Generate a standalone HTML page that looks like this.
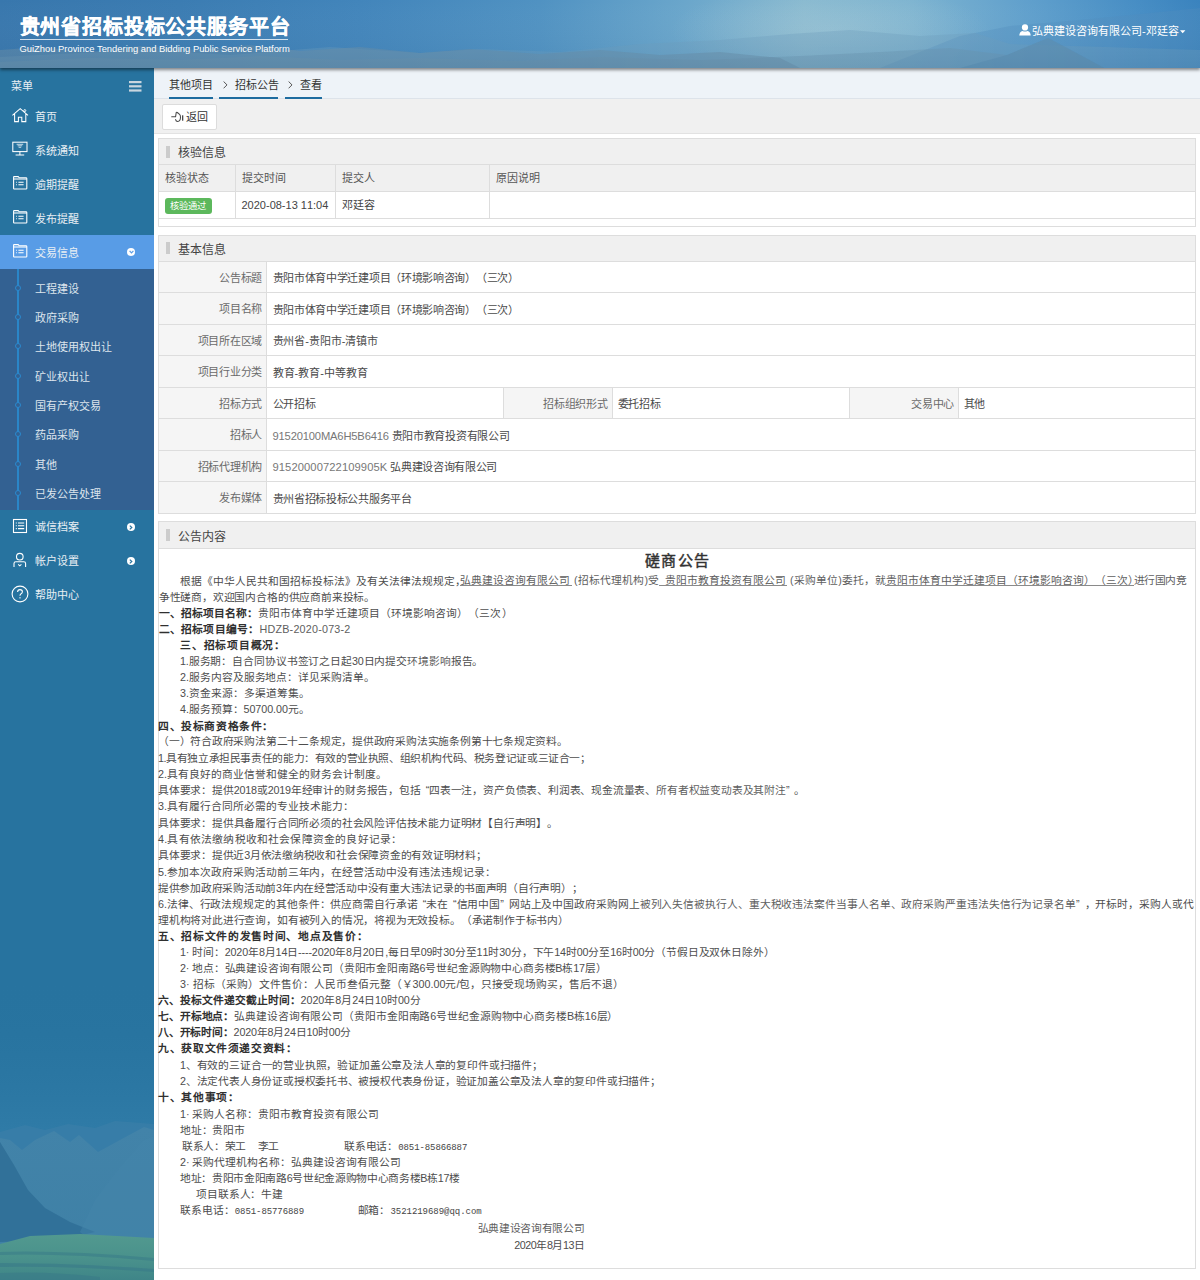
<!DOCTYPE html>
<html lang="zh-CN"><head><meta charset="utf-8">
<style>
*{box-sizing:border-box;margin:0;padding:0}
html,body{width:1200px;height:1280px;overflow:hidden;background:#fff;font-family:"Liberation Sans",sans-serif;color:#333}
#hd{position:absolute;left:0;top:0;width:1200px;height:68px;overflow:hidden;background:#3d80b6;box-shadow:0 2px 3px rgba(0,0,0,.45);z-index:5}
#hd .t{position:absolute;left:19.5px;top:11px;font-size:20px;font-weight:bold;color:#fff;letter-spacing:0.85px;-webkit-text-stroke:0.35px #fff;white-space:nowrap}
#hd .ul{position:absolute;left:20px;top:39px;width:268px;height:1px;background:rgba(255,255,255,.75)}
#hd .e{position:absolute;left:19.5px;top:43px;font-size:9.39px;color:#fff;white-space:nowrap}
#hd .u{position:absolute;left:1032px;top:22px;font-size:11px;color:#fff;white-space:nowrap}
#sb{position:absolute;left:0;top:68px;width:154px;height:1212px;background:#27739f;overflow:hidden}
#main{position:absolute;left:154px;top:68px;width:1046px;height:1212px;background:#fff}
.crumb{position:absolute;left:0;top:0;width:1046px;height:31px;background:#eef3f8;border-bottom:1px solid #dde3ea}
.tb{position:absolute;left:0;top:31px;width:1046px;height:35px;background:#f0f0f0;border-bottom:1px solid #e2e2e2}
.panel{position:absolute;left:4px;width:1038px;border:1px solid #ddd;background:#fff}
.ph{height:26px;background:#f0f0f0;border-bottom:1px solid #ddd;position:relative}
.ph .bar{position:absolute;left:8px;top:8px;width:4px;height:12px;background:#ccc}
.ph .tt{position:absolute;left:20px;top:5px;font-size:12px;color:#444}

#sb .it{position:absolute;left:0;width:154px;height:34px}
#sb .tx{position:absolute;left:35px;font-size:11px;color:#e9eff4;white-space:nowrap;line-height:14px}
#sb svg{position:absolute}
#sb .sub{position:absolute;left:0;top:201px;width:154px;height:241px;background:#336192}
#sb .vl{position:absolute;left:17px;top:0;width:2px;height:241px;background:#2a86c8}
#sb .dot{position:absolute;left:15px;width:6px;height:6px;border-radius:50%;border:1px solid #2a8ad0;background:#336192}
#sb .chev{position:absolute;left:126.8px;width:8.5px;height:8.5px;border-radius:50%;background:#fff}

.crumb .ci{position:absolute;top:10px;font-size:11px;color:#333;white-space:nowrap;line-height:14px}
.crumb .cu{position:absolute;top:29px;height:2px;background:#1d6ca0}
.crumb .gt{position:absolute;top:14px;width:4px;height:4px;border-right:1px solid #555;border-top:1px solid #555;transform:rotate(45deg)}
.btn{position:absolute;left:7.5px;top:5px;width:55px;height:26px;background:#fff;border:1px solid #dcdcdc;border-radius:2px}
.btn .bt{position:absolute;left:23px;top:5px;font-size:11px;color:#333;line-height:14px}
.c{position:absolute;white-space:nowrap;line-height:14px;text-spacing-trim:space-all;font-kerning:none}
.hl{position:absolute;height:1px;background:#ddd}
.vl2{position:absolute;width:1px;background:#ddd}
</style></head>
<body>
<div id="hd"><svg style="position:absolute;left:0;top:0" width="1200" height="68" viewBox="0 0 1200 68">
<defs>
<linearGradient id="hg" x1="0" y1="0" x2="1" y2="0">
<stop offset="0" stop-color="#3877ad"/>
<stop offset="0.15" stop-color="#3b7cb2"/>
<stop offset="0.3" stop-color="#4285bb"/>
<stop offset="0.45" stop-color="#5092c2"/>
<stop offset="0.57" stop-color="#6aa6cb"/>
<stop offset="0.67" stop-color="#86b8cf"/>
<stop offset="0.76" stop-color="#7cb3d0"/>
<stop offset="0.86" stop-color="#5f9fcc"/>
<stop offset="0.95" stop-color="#468dc4"/>
<stop offset="1" stop-color="#3a83be"/>
</linearGradient>
<linearGradient id="vg" x1="0" y1="0" x2="0" y2="1">
<stop offset="0" stop-color="#ffffff" stop-opacity="0"/>
<stop offset="1" stop-color="#20466a" stop-opacity="0.08"/>
</linearGradient>
<radialGradient id="mist" cx="0.5" cy="0.5" r="0.5">
<stop offset="0" stop-color="#a6cad8" stop-opacity="0.45"/>
<stop offset="1" stop-color="#a6cad8" stop-opacity="0"/>
</radialGradient>
</defs>
<rect width="1200" height="68" fill="url(#hg)"/>
<ellipse cx="830" cy="30" rx="160" ry="45" fill="url(#mist)"/>
<path d="M880 68 L960 36 L1010 26 L1080 20 L1140 14 L1200 8 L1200 68 Z" fill="#4f8cbd" opacity="0.35"/>
<path d="M0 68 L0 57 L60 54 L150 50 L230 55 L330 47 L420 53 L480 49 L560 52 L640 44 L720 40 L790 34 L850 30 L920 36 L975 33 L1010 44 L1200 50 L1200 68 Z" fill="#6d9dbd" opacity="0.35"/>
<path d="M0 68 L0 62 L90 58 L180 60 L260 56 L340 60 L420 58 L520 61 L600 57 L700 60 L800 56 L880 52 L950 48 L1007 55 L1048 38 L1104 68 Z" fill="#6a93ae" opacity="0.4"/>
<path d="M960 68 L1007 55 L1048 38 L1075 52 L1104 68 Z" fill="#5689af" opacity="0.4"/>
<path d="M0 68 L0 50 L40 47 L90 52 L140 46 L200 50 L250 45 L300 51 L360 47 L420 53 L470 49 L540 54 L600 50 L660 55 L720 52 L780 58 L800 68 Z" fill="#678ea8" opacity="0.5"/>
<rect width="1200" height="68" fill="url(#vg)"/>
</svg>
  <div class="t">贵州省招标投标公共服务平台</div>
  <div class="ul"></div>
  <div class="e">GuiZhou Province Tendering and Bidding Public Service Platform</div>
  <svg style="position:absolute;left:1019px;top:24px" width="12" height="12" viewBox="0 0 12 12"><circle cx="6" cy="3.4" r="3.1" fill="#fff"/><path d="M0.3 11.6 Q0.4 7.6 3.6 6.9 Q6 7.9 8.4 6.9 Q11.6 7.6 11.7 11.6 Z" fill="#fff"/></svg><div class="u">弘典建设咨询有限公司-邓廷容</div><svg style="position:absolute;left:1180px;top:30px" width="6" height="4" viewBox="0 0 6 4"><path d="M0 0.3 H5.4 L2.7 3.2 Z" fill="#fff"/></svg>
</div>
<div id="sb"><svg style="position:absolute;left:0;top:912px" width="154" height="300" viewBox="0 980 154 300">
<defs>
<linearGradient id="sg1" x1="0" y1="0" x2="0" y2="1">
<stop offset="0" stop-color="#27739f" stop-opacity="0"/>
<stop offset="1" stop-color="#2f7ba7" stop-opacity="1"/>
</linearGradient>
<linearGradient id="field" x1="0" y1="0" x2="0" y2="1">
<stop offset="0" stop-color="#52998f"/>
<stop offset="0.5" stop-color="#4a928c"/>
<stop offset="1" stop-color="#3f8588"/>
</linearGradient>
<linearGradient id="mtn" x1="0" y1="0" x2="0" y2="1">
<stop offset="0" stop-color="#4283a9"/>
<stop offset="1" stop-color="#3e80a5"/>
</linearGradient>
</defs>
<rect x="0" y="980" width="154" height="150" fill="url(#sg1)"/>
<rect x="0" y="1129" width="154" height="151" fill="#2f7ba7"/>
<path d="M0 1132 L25 1125 L45 1130 L68 1124 L95 1128 L115 1121 L154 1124 L154 1280 L0 1280 Z" fill="#3a7fa8" opacity="0.7"/>
<path d="M0 1138 L10 1140 L22 1150 L35 1140 L54 1131 L70 1142 L79 1135 L98 1152 L120 1140 L144 1127 L154 1130 L154 1280 L0 1280 Z" fill="url(#mtn)"/>
<path d="M0 1142 L14 1165 L28 1190 L45 1208 L70 1222 L95 1232 L60 1240 L0 1242 Z" fill="#2f6f97" opacity="0.85"/>
<path d="M80 1232 L95 1200 L118 1170 L144 1140 L154 1136 L154 1240 L90 1240 Z" fill="#4586ab" opacity="0.45"/>
<path d="M0 1244 L30 1236 L80 1234 L154 1238 L154 1280 L0 1280 Z" fill="url(#field)"/>
<path d="M0 1252 Q60 1250 154 1258 L154 1261 Q60 1253 0 1255 Z" fill="#3a7d88" opacity="0.6"/>
<path d="M0 1263 Q70 1263 154 1269 L154 1272 Q70 1266 0 1267 Z" fill="#387a88" opacity="0.6"/>
<path d="M0 1273 Q50 1271 100 1277 L100 1280 L0 1280 Z" fill="#387888" opacity="0.5"/>
</svg>
  <div class="tx" style="left:11px;top:11px">菜单</div>
  <svg style="left:129px;top:13px" width="13" height="11" viewBox="0 0 13 11"><rect x="0" y="0" width="12.5" height="2.2" fill="#c9d6df"/><rect x="0" y="4.2" width="12.5" height="2.2" fill="#c9d6df"/><rect x="0" y="8.4" width="12.5" height="2.2" fill="#c9d6df"/></svg>
  <svg style="left:11px;top:39px" width="18" height="16" viewBox="0 0 18 16"><path d="M1.4 8.4 L9.2 1.6 L17 8.4 M3.6 6.6 V14.6 H7.4 V10.2 H10.8 V14.6 H14.8 V6.6" stroke="#fff" fill="none" stroke-width="1.05"/><circle cx="13.8" cy="3.6" r="1" stroke="#fff" fill="none" stroke-width="0.9"/></svg>
  <div class="tx" style="top:42.0px">首页</div>
  <svg style="left:11px;top:73px" width="18" height="16" viewBox="0 0 18 16"><rect x="1.8" y="1.2" width="14.2" height="9.4" stroke="#fff" fill="none" stroke-width="1.05"/><path d="M8.9 10.6 V13.6 M4.6 14 H13.2" stroke="#fff" fill="none" stroke-width="1.05"/><path d="M5.6 3.3 H12.2 M6.6 4.8 H11.2 M7.6 6.3 H10.2" stroke="#c5dbe8" stroke-width="1"/></svg>
  <div class="tx" style="top:76.0px">系统通知</div>
<svg style="left:12px;top:108px" width="16" height="14" viewBox="0 0 16 14"><path d="M1.6 12.4 V1.2 Q1.6 0.6 2.2 0.6 H6.2 L7.2 1.8 H14 Q14.8 1.8 14.8 2.6 V12.4 Q14.8 13 14 13 H2.2 Q1.6 13 1.6 12.4 Z" stroke="#fff" fill="none" stroke-width="1.1"/><path d="M1.6 3 H14.8" stroke="#fff" fill="none" stroke-width="1.1"/><path d="M4.2 6.2 H5 M4.2 8.8 H5 M6.4 6.2 H11.6 M6.4 8.8 H11.6" stroke="#fff" stroke-width="1.1"/></svg><div class="tx" style="top:110.0px">逾期提醒</div>
<svg style="left:12px;top:142px" width="16" height="14" viewBox="0 0 16 14"><path d="M1.6 12.4 V1.2 Q1.6 0.6 2.2 0.6 H6.2 L7.2 1.8 H14 Q14.8 1.8 14.8 2.6 V12.4 Q14.8 13 14 13 H2.2 Q1.6 13 1.6 12.4 Z" stroke="#fff" fill="none" stroke-width="1.1"/><path d="M1.6 3 H14.8" stroke="#fff" fill="none" stroke-width="1.1"/><path d="M4.2 6.2 H5 M4.2 8.8 H5 M6.4 6.2 H11.6 M6.4 8.8 H11.6" stroke="#fff" stroke-width="1.1"/></svg><div class="tx" style="top:144.0px">发布提醒</div>
<div class="it" style="top:167px;background:#589ce6"></div><svg style="left:12px;top:176px" width="16" height="14" viewBox="0 0 16 14"><path d="M1.6 12.4 V1.2 Q1.6 0.6 2.2 0.6 H6.2 L7.2 1.8 H14 Q14.8 1.8 14.8 2.6 V12.4 Q14.8 13 14 13 H2.2 Q1.6 13 1.6 12.4 Z" stroke="#fff" fill="none" stroke-width="1.1"/><path d="M1.6 3 H14.8" stroke="#fff" fill="none" stroke-width="1.1"/><path d="M4.2 6.2 H5 M4.2 8.8 H5 M6.4 6.2 H11.6 M6.4 8.8 H11.6" stroke="#fff" stroke-width="1.1"/></svg><div class="tx" style="top:178.0px">交易信息</div><div class="chev" style="top:179.5px"><svg style="left:2px;top:2.5px" width="5" height="4" viewBox="0 0 5 4"><path d="M0.6 0.8 L2.5 2.8 L4.4 0.8" stroke="#589ce6" stroke-width="1.2" fill="none"/></svg></div>
<div class="sub"><div class="vl"></div><div class="dot" style="top:15.8px"></div><div class="tx" style="color:#dde5ed;top:12.8px">工程建设</div><div class="dot" style="top:45.1px"></div><div class="tx" style="color:#dde5ed;top:42.1px">政府采购</div><div class="dot" style="top:74.4px"></div><div class="tx" style="color:#dde5ed;top:71.4px">土地使用权出让</div><div class="dot" style="top:103.7px"></div><div class="tx" style="color:#dde5ed;top:100.7px">矿业权出让</div><div class="dot" style="top:133.0px"></div><div class="tx" style="color:#dde5ed;top:130.0px">国有产权交易</div><div class="dot" style="top:162.3px"></div><div class="tx" style="color:#dde5ed;top:159.3px">药品采购</div><div class="dot" style="top:191.6px"></div><div class="tx" style="color:#dde5ed;top:188.6px">其他</div><div class="dot" style="top:220.9px"></div><div class="tx" style="color:#dde5ed;top:217.9px">已发公告处理</div></div>
<svg style="left:12px;top:450px" width="16" height="16" viewBox="0 0 16 16"><rect x="1.5" y="1.5" width="13" height="13" stroke="#fff" fill="none" stroke-width="1.1"/><path d="M3.8 5 H4.8 M3.8 7.8 H4.8 M3.8 10.6 H4.8 M6 5 H12.2 M6 7.8 H12.2 M6 10.6 H12.2" stroke="#fff" stroke-width="1.1"/></svg><div class="tx" style="top:452px">诚信档案</div><div class="chev" style="top:454.5px"><svg style="left:2.5px;top:2px" width="4" height="5" viewBox="0 0 4 5"><path d="M0.8 0.6 L2.8 2.5 L0.8 4.4" stroke="#27739f" stroke-width="1.2" fill="none"/></svg></div>
<svg style="left:12px;top:484px" width="16" height="16" viewBox="0 0 16 16"><circle cx="7.8" cy="4.7" r="3.3" stroke="#fff" fill="none" stroke-width="1.1"/><path d="M2 15 V11.6 Q2 9.8 3.8 9.8 H11.8 Q13.6 9.8 13.6 11.6 V15" stroke="#fff" fill="none" stroke-width="1.1"/><path d="M6.2 12.4 L7.8 13.8 L9.4 12.4" stroke="#fff" fill="none" stroke-width="1.1"/></svg><div class="tx" style="top:486px">帐户设置</div><div class="chev" style="top:488.5px"><svg style="left:2.5px;top:2px" width="4" height="5" viewBox="0 0 4 5"><path d="M0.8 0.6 L2.8 2.5 L0.8 4.4" stroke="#27739f" stroke-width="1.2" fill="none"/></svg></div>
<svg style="left:11px;top:517px" width="18" height="18" viewBox="0 0 18 18"><circle cx="9" cy="9" r="7.9" stroke="#fff" fill="none" stroke-width="1.1"/><path d="M6.6 7 Q6.6 4.6 9 4.6 Q11.4 4.6 11.4 6.8 Q11.4 8.2 9.8 9 Q9 9.5 9 10.8" stroke="#fff" fill="none" stroke-width="1.1"/><rect x="8.4" y="12.2" width="1.2" height="1.2" fill="#fff"/></svg><div class="tx" style="top:520px">帮助中心</div>
</div>

<div id="main"><div class="crumb">
    <div class="ci" style="left:15px">其他项目</div><div class="cu" style="left:15px;width:43.5px"></div>
    <svg style="position:absolute;left:68.5px;top:13px" width="5" height="8" viewBox="0 0 5 8"><path d="M0.6 0.5 L4 3.9 L0.6 7.3" stroke="#555" stroke-width="1" fill="none"/></svg>
    <div class="ci" style="left:80.5px">招标公告</div><div class="cu" style="left:65px;width:59px"></div>
    <svg style="position:absolute;left:134px;top:13px" width="5" height="8" viewBox="0 0 5 8"><path d="M0.6 0.5 L4 3.9 L0.6 7.3" stroke="#555" stroke-width="1" fill="none"/></svg>
    <div class="ci" style="left:145.5px">查看</div><div class="cu" style="left:130.5px;width:37px"></div>
  </div>
  <div class="tb"><div class="btn"><svg style="position:absolute;left:8px;top:6px" width="14" height="13" viewBox="0 0 14 13"><path d="M0.7 5.7 H4.6 M4.6 5.7 L5.2 1.6 Q5.6 0.9 6.3 1.5 L8.6 3.4 Q9.6 4.4 9.5 6.6 Q9.3 10.4 6.8 10.5 Q5 10.6 4.6 8.6" stroke="#4a4a4a" stroke-width="1.05" fill="none" stroke-linecap="round"/><rect x="11" y="4.3" width="1.3" height="5.4" fill="#4a4a4a"/></svg><div class="bt">返回</div></div></div>
  <div style="position:absolute;left:4px;top:70px;width:1038px;height:89px;background:#fff;box-sizing:border-box;border:1px solid #ddd"></div>
<div style="position:absolute;left:5px;top:71px;width:1036px;height:25px;background:#f0f0f0;"></div>
<div style="position:absolute;left:5px;top:96px;width:1036px;height:1px;background:#ddd;"></div>
<div style="position:absolute;left:12px;top:78px;width:4px;height:12px;background:#ccc;"></div>
<div class="c" style="left:23.50px;top:78.00px;font-size:12px;line-height:14px;color:#444;">核验信息</div>
<div style="position:absolute;left:5px;top:97px;width:1036px;height:26px;background:#f0f0f0;"></div>
<div style="position:absolute;left:5px;top:123px;width:1036px;height:1px;background:#ddd;"></div>
<div style="position:absolute;left:5px;top:150px;width:1036px;height:1px;background:#ddd;"></div>
<div style="position:absolute;left:81px;top:97px;width:1px;height:53px;background:#ddd;"></div>
<div style="position:absolute;left:181px;top:97px;width:1px;height:53px;background:#ddd;"></div>
<div style="position:absolute;left:335px;top:97px;width:1px;height:53px;background:#ddd;"></div>
<div class="c" style="left:11.00px;top:103.00px;font-size:11px;line-height:14px;color:#555;">核验状态</div>
<div class="c" style="left:87.50px;top:103.00px;font-size:11px;line-height:14px;color:#555;">提交时间</div>
<div class="c" style="left:187.50px;top:103.00px;font-size:11px;line-height:14px;color:#555;">提交人</div>
<div class="c" style="left:341.50px;top:103.00px;font-size:11px;line-height:14px;color:#555;">原因说明</div>
<div style="position:absolute;left:10.699999999999989px;top:130px;width:47.3px;height:16px;background:#5cb85c;border-radius:3px"></div>
<div class="c" style="left:16.00px;top:130.50px;font-size:9.3px;line-height:14px;color:#fff;">核验通过</div>
<div class="c" style="left:87.50px;top:129.50px;font-size:11px;line-height:14px;color:#444;">2020-08-13 11:04</div>
<div class="c" style="left:187.50px;top:129.50px;font-size:11px;line-height:14px;color:#444;">邓廷容</div>
<div style="position:absolute;left:4px;top:167px;width:1038px;height:279px;background:#fff;box-sizing:border-box;border:1px solid #ddd"></div>
<div style="position:absolute;left:5px;top:168px;width:1036px;height:25px;background:#f0f0f0;"></div>
<div style="position:absolute;left:5px;top:193px;width:1036px;height:1px;background:#ddd;"></div>
<div style="position:absolute;left:12px;top:174px;width:4px;height:12px;background:#ccc;"></div>
<div class="c" style="left:23.50px;top:175.00px;font-size:12px;line-height:14px;color:#444;">基本信息</div>
<div style="position:absolute;left:5px;top:194px;width:107px;height:251px;background:#f5f5f5;"></div>
<div style="position:absolute;left:5px;top:224px;width:1036px;height:1px;background:#ddd;"></div>
<div style="position:absolute;left:5px;top:256px;width:1036px;height:1px;background:#ddd;"></div>
<div style="position:absolute;left:5px;top:287px;width:1036px;height:1px;background:#ddd;"></div>
<div style="position:absolute;left:5px;top:319px;width:1036px;height:1px;background:#ddd;"></div>
<div style="position:absolute;left:5px;top:350px;width:1036px;height:1px;background:#ddd;"></div>
<div style="position:absolute;left:5px;top:382px;width:1036px;height:1px;background:#ddd;"></div>
<div style="position:absolute;left:5px;top:413px;width:1036px;height:1px;background:#ddd;"></div>
<div style="position:absolute;left:112px;top:194px;width:1px;height:251px;background:#ddd;"></div>
<div style="position:absolute;left:349px;top:320px;width:109px;height:30px;background:#f5f5f5;"></div>
<div style="position:absolute;left:349px;top:320px;width:1px;height:30px;background:#ddd;"></div>
<div style="position:absolute;left:458px;top:320px;width:1px;height:30px;background:#ddd;"></div>
<div style="position:absolute;left:695px;top:320px;width:109px;height:30px;background:#f5f5f5;"></div>
<div style="position:absolute;left:695px;top:320px;width:1px;height:30px;background:#ddd;"></div>
<div style="position:absolute;left:804px;top:320px;width:1px;height:30px;background:#ddd;"></div>
<div class="c" style="right:938.00px;top:202.70px;font-size:11px;line-height:14px;color:#6a6a6a;text-align:right;letter-spacing:-0.3px">公告标题</div>
<div class="c" style="left:118.50px;top:203.00px;font-size:11px;line-height:14px;color:#4a4a4a;letter-spacing:-0.3px">贵阳市体育中学迁建项目（环境影响咨询）（三次）</div>
<div class="c" style="right:938.00px;top:234.20px;font-size:11px;line-height:14px;color:#6a6a6a;text-align:right;letter-spacing:-0.3px">项目名称</div>
<div class="c" style="left:118.50px;top:234.50px;font-size:11px;line-height:14px;color:#4a4a4a;letter-spacing:-0.3px">贵阳市体育中学迁建项目（环境影响咨询）（三次）</div>
<div class="c" style="right:938.00px;top:265.70px;font-size:11px;line-height:14px;color:#6a6a6a;text-align:right;letter-spacing:-0.3px">项目所在区域</div>
<div class="c" style="left:118.50px;top:266.00px;font-size:11px;line-height:14px;color:#4a4a4a;letter-spacing:-0.3px"><span style="letter-spacing:-0.05px">贵州省-贵阳市-清镇市</span></div>
<div class="c" style="right:938.00px;top:297.20px;font-size:11px;line-height:14px;color:#6a6a6a;text-align:right;letter-spacing:-0.3px">项目行业分类</div>
<div class="c" style="left:118.50px;top:297.50px;font-size:11px;line-height:14px;color:#4a4a4a;letter-spacing:-0.3px"><span style="letter-spacing:0px">教育-教育-中等教育</span></div>
<div class="c" style="right:938.00px;top:328.70px;font-size:11px;line-height:14px;color:#6a6a6a;text-align:right;letter-spacing:-0.3px">招标方式</div>
<div class="c" style="left:118.50px;top:329.00px;font-size:11px;line-height:14px;color:#4a4a4a;letter-spacing:-0.3px">公开招标</div>
<div class="c" style="right:938.00px;top:360.20px;font-size:11px;line-height:14px;color:#6a6a6a;text-align:right;letter-spacing:-0.3px">招标人</div>
<div class="c" style="left:118.50px;top:360.50px;font-size:11px;line-height:14px;color:#4a4a4a;letter-spacing:-0.3px"><span style="color:#777;letter-spacing:-0.17px;font-size:11.2px">91520100MA6H5B6416</span> 贵阳市教育投资有限公司</div>
<div class="c" style="right:938.00px;top:391.70px;font-size:11px;line-height:14px;color:#6a6a6a;text-align:right;letter-spacing:-0.3px">招标代理机构</div>
<div class="c" style="left:118.50px;top:392.00px;font-size:11px;line-height:14px;color:#4a4a4a;letter-spacing:-0.3px"><span style="color:#777;letter-spacing:0.09px;font-size:11.2px">91520000722109905K</span> 弘典建设咨询有限公司</div>
<div class="c" style="right:938.00px;top:423.20px;font-size:11px;line-height:14px;color:#6a6a6a;text-align:right;letter-spacing:-0.3px">发布媒体</div>
<div class="c" style="left:118.50px;top:423.50px;font-size:11px;line-height:14px;color:#4a4a4a;letter-spacing:-0.3px">贵州省招标投标公共服务平台</div>
<div class="c" style="right:592.50px;top:328.70px;font-size:11px;line-height:14px;color:#6a6a6a;text-align:right;letter-spacing:-0.3px">招标组织形式</div>
<div class="c" style="left:463.50px;top:329.00px;font-size:11px;line-height:14px;color:#4a4a4a;letter-spacing:-0.3px">委托招标</div>
<div class="c" style="right:246.00px;top:328.70px;font-size:11px;line-height:14px;color:#6a6a6a;text-align:right;letter-spacing:-0.3px">交易中心</div>
<div class="c" style="left:809.50px;top:329.00px;font-size:11px;line-height:14px;color:#4a4a4a;letter-spacing:-0.3px">其他</div>
<div style="position:absolute;left:4px;top:453px;width:1038px;height:748px;background:#fff;box-sizing:border-box;border:1px solid #ddd"></div>
<div style="position:absolute;left:5px;top:454px;width:1036px;height:26px;background:#f0f0f0;"></div>
<div style="position:absolute;left:5px;top:480px;width:1036px;height:1px;background:#ddd;"></div>
<div style="position:absolute;left:12px;top:461px;width:4px;height:12px;background:#ccc;"></div>
<div class="c" style="left:23.50px;top:461.50px;font-size:12px;line-height:14px;color:#444;">公告内容</div>
<div class="c" id="L0" style="left:26.00px;top:505.60px;font-size:10.75px;line-height:14px;letter-spacing:0.000px"><span style="color:#4d4d4d">根据《中华人民共和国招标投标法》及有关法律法规规定，</span></div>
<div class="c" id="L100" style="left:306.00px;top:504.80px;font-size:10.75px;line-height:14px;letter-spacing:0.000px"><span style="color:#5e5e5e">弘典建设咨询有限公司</span></div>
<div class="c" id="L101" style="left:420.00px;top:504.80px;font-size:10.75px;line-height:14px;letter-spacing:0.125px"><span style="color:#5e5e5e">(招标代理机构)受</span></div>
<div class="c" id="L102" style="left:510.50px;top:504.80px;font-size:10.75px;line-height:14px;letter-spacing:0.000px"><span style="color:#5e5e5e">贵阳市教育投资有限公司</span></div>
<div class="c" id="L103" style="left:636.00px;top:504.80px;font-size:10.75px;line-height:14px;letter-spacing:0.111px"><span style="color:#5e5e5e">(采购单位)委托，就</span></div>
<div class="c" id="L104" style="left:732.00px;top:504.80px;font-size:10.75px;line-height:14px;letter-spacing:0.000px"><span style="color:#5e5e5e">贵阳市体育中学迁建项目（环境影响咨询）（三次）</span></div>
<div class="c" id="L105" style="left:979.50px;top:504.80px;font-size:10.75px;line-height:14px;letter-spacing:-0.500px"><span style="color:#5e5e5e">进行国内竞</span></div>
<div class="c" id="L1" style="left:4.70px;top:521.70px;font-size:10.75px;line-height:14px;letter-spacing:-0.178px"><span style="color:#4d4d4d">争性磋商，欢迎国内合格的供应商前来投标。</span></div>
<div class="c" id="L2" style="left:4.50px;top:537.50px;font-size:10.75px;line-height:14px;letter-spacing:0.065px"><span style="color:#303030;font-weight:bold">一、招标项目名称：</span><span style="color:#4d4d4d">贵阳市体育中学迁建项目（环境影响咨询）（三次）</span></div>
<div class="c" id="L3" style="left:4.50px;top:553.50px;font-size:10.75px;line-height:14px;letter-spacing:0.217px"><span style="color:#303030;font-weight:bold">二、招标项目编号：</span><span style="color:#5e5e5e">HDZB-2020-073-2</span></div>
<div class="c" id="L4" style="left:26.00px;top:569.50px;font-size:10.75px;line-height:14px;letter-spacing:0.750px"><span style="color:#303030;font-weight:bold">三、招标项目概况：</span></div>
<div class="c" id="L5" style="left:26.00px;top:585.80px;font-size:10.75px;line-height:14px;letter-spacing:-0.122px"><span style="color:#4d4d4d">1.服务期：自合同协议书签订之日起30日内提交</span><span style="color:#5e5e5e">环境影响</span><span style="color:#4d4d4d">报告。</span></div>
<div class="c" id="L6" style="left:26.00px;top:602.00px;font-size:10.75px;line-height:14px;letter-spacing:-0.056px"><span style="color:#4d4d4d">2.服务内容及服务地点：详见采购清单。</span></div>
<div class="c" id="L7" style="left:26.00px;top:618.40px;font-size:10.75px;line-height:14px;letter-spacing:0.000px"><span style="color:#4d4d4d">3.资金来源：多渠道筹集。</span></div>
<div class="c" id="L8" style="left:26.00px;top:634.30px;font-size:10.75px;line-height:14px;letter-spacing:-0.062px"><span style="color:#4d4d4d">4.服务预算：50700.00元。</span></div>
<div class="c" id="L9" style="left:4.00px;top:650.50px;font-size:10.75px;line-height:14px;letter-spacing:0.603px"><span style="color:#303030;font-weight:bold">四、投标商资格条件：</span></div>
<div class="c" id="L10" style="left:4.00px;top:666.40px;font-size:10.75px;line-height:14px;letter-spacing:-0.216px"><span style="color:#4d4d4d">（一）符合政府采购法第二十二条规定，提供政府采购法实施条例第十七条规定资料。</span></div>
<div class="c" id="L11" style="left:4.00px;top:682.50px;font-size:10.75px;line-height:14px;letter-spacing:-0.390px"><span style="color:#4d4d4d">1.具有独立承担民事责任的能力：有效的营业执照、组织机构代码、税务登记证或三证合一；</span></div>
<div class="c" id="L12" style="left:4.00px;top:699.00px;font-size:10.75px;line-height:14px;letter-spacing:0.000px"><span style="color:#4d4d4d">2.具有良好的商业信誉和健全的财务会计制度。</span></div>
<div class="c" id="L13" style="left:4.00px;top:715.30px;font-size:10.75px;line-height:14px;letter-spacing:-0.186px"><span style="color:#4d4d4d">具体要求：提供2018或2019年经审计的财务报告，包括<span style="padding-left:5px">“</span>四表一注，资产负债表、利润表、现金流量表、</span><span style="color:#5e5e5e">所有者权益变动表及其附注</span><span style="color:#4d4d4d"><span style="padding-right:5px">”</span>。</span></div>
<div class="c" id="L14" style="left:4.00px;top:731.40px;font-size:10.75px;line-height:14px;letter-spacing:0.019px"><span style="color:#4d4d4d">3.具有履行合同所必需的专业技术能力：</span></div>
<div class="c" id="L15" style="left:4.00px;top:747.80px;font-size:10.75px;line-height:14px;letter-spacing:-0.194px"><span style="color:#4d4d4d">具体要求：提供具备履行合同所必须的社会风险评估技术能力证明材【自行声明】。</span></div>
<div class="c" id="L16" style="left:4.00px;top:764.00px;font-size:10.75px;line-height:14px;letter-spacing:0.192px"><span style="color:#4d4d4d">4.具有依法缴纳税收和社会保障资金的良好记录：</span></div>
<div class="c" id="L17" style="left:4.00px;top:780.40px;font-size:10.75px;line-height:14px;letter-spacing:-0.233px"><span style="color:#4d4d4d">具体要求：提供近3月依法缴纳税收和社会保障资金的有效证明材料；</span></div>
<div class="c" id="L18" style="left:4.00px;top:796.60px;font-size:10.75px;line-height:14px;letter-spacing:-0.033px"><span style="color:#4d4d4d">5.参加本次政府采购活动前三年内，在经营活动中没有违法违规记录：</span></div>
<div class="c" id="L19" style="left:4.00px;top:812.80px;font-size:10.75px;line-height:14px;letter-spacing:-0.265px"><span style="color:#4d4d4d">提供参加政府采购活动前3年内在经营活动中没有重大违法记录的书面声明（自行声明）；</span></div>
<div class="c" id="L20" style="left:4.00px;top:828.80px;font-size:10.75px;line-height:14px;letter-spacing:-0.090px"><span style="color:#4d4d4d">6.法律、行政法规规定的其他条件：供应商需自行承诺<span style="padding-left:5px">“</span>未在<span style="padding-left:5px">“</span>信用中国<span style="padding-right:5px">”</span>网站上及中国政府采购网上</span><span style="color:#5e5e5e">被列入失信被执行人、重大税收违法案件当事人名单、政府采购严重违法失信行为记录名单</span><span style="color:#4d4d4d"><span style="padding-right:5px">”</span>，开标时，采购人或代</span></div>
<div class="c" id="L21" style="left:4.00px;top:844.80px;font-size:10.75px;line-height:14px;letter-spacing:-0.189px"><span style="color:#4d4d4d">理机构将对此进行查询，如有被列入的情况，将视为无效投标。（承诺制作于标书内）</span></div>
<div class="c" id="L22" style="left:4.00px;top:860.50px;font-size:10.75px;line-height:14px;letter-spacing:0.680px"><span style="color:#303030;font-weight:bold">五、招标文件的发售时间、地点及售价：</span></div>
<div class="c" id="L23" style="left:26.00px;top:876.70px;font-size:10.75px;line-height:14px;letter-spacing:-0.143px"><span style="color:#4d4d4d">1· 时间：2020年8月14日----2020年8月20日,每日早09时30分至11时30分，下午14时00分至16时00分（节假日及双休日除外）</span></div>
<div class="c" id="L24" style="left:26.00px;top:892.90px;font-size:10.75px;line-height:14px;letter-spacing:-0.167px"><span style="color:#4d4d4d">2· 地点：弘典建设咨询有限公司（贵阳市金阳南路6号世纪金源购物中心商务楼B栋17层）</span></div>
<div class="c" id="L25" style="left:26.00px;top:908.90px;font-size:10.75px;line-height:14px;letter-spacing:0.000px"><span style="color:#4d4d4d">3· 招标（采购）文件售价：人民币叁佰元整（￥300.00元/包，只接受现场购买，售后不退）</span></div>
<div class="c" id="L26" style="left:4.00px;top:925.10px;font-size:10.75px;line-height:14px;letter-spacing:-0.036px"><span style="color:#303030;font-weight:bold">六、投标文件递交截止时间：</span><span style="color:#4d4d4d">2020年8月24日10时00分</span></div>
<div class="c" id="L27" style="left:4.00px;top:941.10px;font-size:10.75px;line-height:14px;letter-spacing:-0.108px"><span style="color:#303030;font-weight:bold">七、开标地点：</span><span style="color:#4d4d4d">弘典建设咨询有限公司（贵阳市金阳南路6号世纪金源购物中心商务楼B栋16层）</span></div>
<div class="c" id="L28" style="left:4.00px;top:957.20px;font-size:10.75px;line-height:14px;letter-spacing:-0.200px"><span style="color:#303030;font-weight:bold">八、开标时间：</span><span style="color:#4d4d4d">2020年8月24日10时00分</span></div>
<div class="c" id="L29" style="left:4.00px;top:973.40px;font-size:10.75px;line-height:14px;letter-spacing:0.636px"><span style="color:#303030;font-weight:bold">九、获取文件须递交资料：</span></div>
<div class="c" id="L30" style="left:26.00px;top:989.60px;font-size:10.75px;line-height:14px;letter-spacing:-0.182px"><span style="color:#4d4d4d">1、有效的三证合一的营业执照，验证加盖公章及法人章的复印件或扫描件；</span></div>
<div class="c" id="L31" style="left:26.00px;top:1005.80px;font-size:10.75px;line-height:14px;letter-spacing:-0.205px"><span style="color:#4d4d4d">2、法定代表人身份证或授权委托书、被授权代表身份证，验证加盖公章及法人章的复印件或扫描件；</span></div>
<div class="c" id="L32" style="left:4.00px;top:1022.00px;font-size:10.75px;line-height:14px;letter-spacing:0.667px"><span style="color:#303030;font-weight:bold">十、其他事项：</span></div>
<div class="c" id="L33" style="left:26.00px;top:1038.60px;font-size:10.75px;line-height:14px;letter-spacing:-0.053px"><span style="color:#4d4d4d">1· 采购人名称：贵阳市教育投资有限公司</span></div>
<div class="c" id="L34" style="left:26.00px;top:1054.70px;font-size:10.75px;line-height:14px;letter-spacing:-0.200px"><span style="color:#4d4d4d">地址：贵阳市</span></div>
<div class="c" id="L35" style="left:28.20px;top:1070.60px;font-size:10.75px;line-height:14px;letter-spacing:-0.400px"><span style="color:#4d4d4d">联系人：荣工</span></div>
<div class="c" id="L135" style="left:104.30px;top:1070.60px;font-size:10.75px;line-height:14px;letter-spacing:-1.000px"><span style="color:#4d4d4d">李工</span></div>
<div class="c" id="L235" style="left:189.75px;top:1070.60px;font-size:10.75px;line-height:14px;letter-spacing:-0.097px"><span style="color:#4d4d4d">联系电话：</span><span style="color:#444;font-family:'Liberation Mono',monospace;font-size:9px">0851-85866887</span></div>
<div class="c" id="L36" style="left:26.00px;top:1086.70px;font-size:10.75px;line-height:14px;letter-spacing:-0.048px"><span style="color:#4d4d4d">2· 采购代理机构名称：弘典建设咨询有限公司</span></div>
<div class="c" id="L37" style="left:26.00px;top:1102.70px;font-size:10.75px;line-height:14px;letter-spacing:-0.333px"><span style="color:#4d4d4d">地址：贵阳市金阳南路6号世纪金源购物中心商务楼B栋17楼</span></div>
<div class="c" id="L38" style="left:42.20px;top:1119.00px;font-size:10.75px;line-height:14px;letter-spacing:-0.142px"><span style="color:#4d4d4d">项目联系人：牛建</span></div>
<div class="c" id="L39" style="left:26.20px;top:1135.20px;font-size:10.75px;line-height:14px;letter-spacing:-0.079px"><span style="color:#4d4d4d">联系电话：</span><span style="color:#444;font-family:'Liberation Mono',monospace;font-size:9px">0851-85776889</span></div>
<div class="c" id="L139" style="left:203.50px;top:1135.20px;font-size:10.75px;line-height:14px;letter-spacing:-0.033px"><span style="color:#4d4d4d">邮箱：</span><span style="color:#444;font-family:'Liberation Mono',monospace;font-size:9px">3521219689@qq.com</span></div>
<div class="c" id="L40" style="left:323.50px;top:1153.30px;font-size:10.75px;line-height:14px;letter-spacing:-0.291px"><span style="color:#5e5e5e">弘典建设咨询有限公司</span></div>
<div class="c" id="L41" style="left:360.20px;top:1169.70px;font-size:10.75px;line-height:14px;letter-spacing:-0.444px"><span style="color:#4d4d4d">2020年8月13日</span></div>
<div class="c" style="left:463px;width:120px;text-align:center;top:483px;font-size:15px;line-height:20px;font-weight:normal;color:#333;-webkit-text-stroke:0.45px #333;letter-spacing:1.5px;text-indent:1.5px">磋商公告</div>
<div style="position:absolute;left:306px;top:517px;width:112px;height:1px;background:#8a8a8a;"></div>
<div style="position:absolute;left:505px;top:517px;width:128px;height:1px;background:#8a8a8a;"></div>
<div style="position:absolute;left:731px;top:517px;width:249px;height:1px;background:#8a8a8a;"></div></div>
</body></html>
